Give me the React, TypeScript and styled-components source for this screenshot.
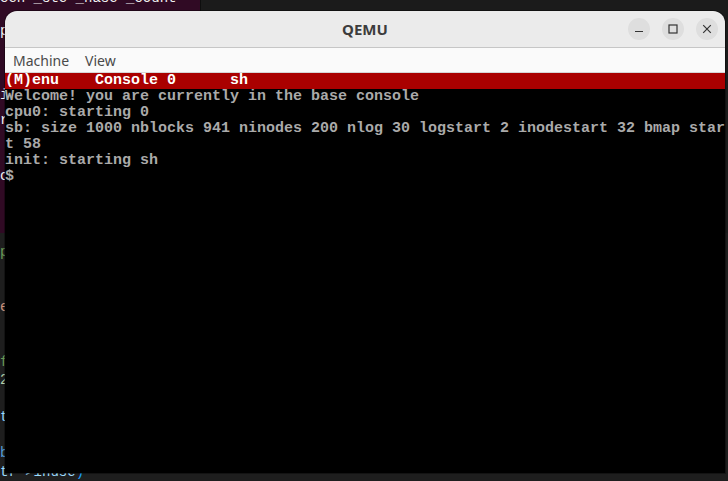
import React from "react";
import styled, { createGlobalStyle } from "styled-components";

const GlobalStyle = createGlobalStyle`
  html, body { margin: 0; padding: 0; background: #1b1b1b; }
  body { width: 728px; height: 481px; overflow: hidden; }
`;

const Desktop = styled.div`
  position: relative;
  width: 728px;
  height: 481px;
  overflow: hidden;
  background: #1b1b1b;
`;

const TermBehind = styled.div`
  position: absolute;
  left: 0;
  top: 0;
  width: 200px;
  height: 233px;
  background: #300a24;
  border-right: 1px solid #0e0e0e;
  overflow: hidden;
  display: flex;
  flex-direction: column;
  font-family: "Liberation Mono", "DejaVu Sans Mono", monospace;
  font-size: 14px;
  line-height: 18px;
  color: #f2f2f2;
`;

const EditorBehind = styled.div`
  position: absolute;
  left: 0;
  top: 233px;
  width: 728px;
  height: 248px;
  background: #1e1e1e;
  overflow: hidden;
  display: flex;
  flex-direction: column;
  padding-top: 10px;
  box-sizing: border-box;
  font-family: "Liberation Mono", "DejaVu Sans Mono", monospace;
  font-size: 14px;
  line-height: 19px;
`;

const BgLine = styled.div<{ $gap?: number; $color?: string }>`
  margin-top: ${(p) => p.$gap ?? 0}px;
  min-height: 1em;
  white-space: pre;
  color: ${(p) => p.$color ?? "inherit"};
`;

const Tok = styled.span<{ $color: string }>`
  color: ${(p) => p.$color};
`;

const Window = styled.div`
  position: absolute;
  left: 5px;
  top: 11px;
  width: 720px;
  display: flex;
  flex-direction: column;
  border-radius: 12px 12px 0 0;
  overflow: hidden;
  box-shadow: 0 0 0 1px rgba(0, 0, 0, 0.35);
`;

const TitleBar = styled.div`
  height: 36px;
  background: #ebebeb;
  border-bottom: 1px solid #c6c6c6;
  display: grid;
  grid-template-columns: 1fr auto 1fr;
  align-items: center;
`;

const Title = styled.div`
  grid-column: 2;
  font-family: "Noto Sans", "Open Sans", sans-serif;
  font-weight: 700;
  font-size: 15px;
  color: #3c3c3c;
`;

const Controls = styled.div`
  grid-column: 3;
  justify-self: end;
  display: flex;
  gap: 12px;
  padding-right: 7px;
`;

const CtrlBtn = styled.div`
  width: 22px;
  height: 22px;
  border-radius: 50%;
  background: #dedede;
  display: grid;
  place-items: center;
`;

const MenuBar = styled.div`
  height: 24px;
  background: #fafafa;
  border-bottom: 1px solid #d6d6d6;
  display: flex;
  align-items: center;
`;

const MenuItem = styled.div`
  padding: 0 8px;
  font-family: "Noto Sans", "Open Sans", sans-serif;
  font-size: 14px;
  color: #4a4a4a;
`;

const Screen = styled.div`
  height: 400px;
  background: #000;
  font-family: "Liberation Mono", "DejaVu Sans Mono", monospace;
  font-size: 15px;
  font-weight: 700;
  line-height: 16px;
  color: #aaaaaa;
  overflow: hidden;
`;

const Row = styled.div<{ $status?: boolean }>`
  height: 16px;
  white-space: pre;
  background: ${(p) => (p.$status ? "#aa0000" : "transparent")};
  color: ${(p) => (p.$status ? "#ffffff" : "#aaaaaa")};
`;

const rows = [
  "Welcome! you are currently in the base console",
  "cpu0: starting 0",
  "sb: size 1000 nblocks 941 ninodes 200 nlog 30 logstart 2 inodestart 32 bmap star",
  "t 58",
  "init: starting sh",
  "$",
];

export default function App() {
  return (
    <>
      <GlobalStyle />
      <Desktop>
        <TermBehind>
          <BgLine $gap={-11}>{"cen _ste _nase _count"}</BgLine>
          <BgLine $gap={15}>{"p"}</BgLine>
          <BgLine $gap={46}>{"i"}</BgLine>
          <BgLine $gap={7}>{"r"}</BgLine>
          <BgLine $gap={38}>{"c"}</BgLine>
        </TermBehind>
        <EditorBehind>
          <BgLine $color="#6a9955">p</BgLine>
          <BgLine> </BgLine>
          <BgLine> </BgLine>
          <BgLine $color="#ce9178">e</BgLine>
          <BgLine> </BgLine>
          <BgLine> </BgLine>
          <BgLine $color="#6a9955">f</BgLine>
          <BgLine $color="#b5cea8">2</BgLine>
          <BgLine> </BgLine>
          <BgLine $color="#9cdcfe">t</BgLine>
          <BgLine> </BgLine>
          <BgLine $color="#569cd6">b</BgLine>
          <BgLine>
            <Tok $color="#9cdcfe">tr-&gt;inuse</Tok>
            <Tok $color="#179fff">)</Tok>
          </BgLine>
        </EditorBehind>

        <Window>
          <TitleBar>
            <Title>QEMU</Title>
            <Controls>
              <CtrlBtn>
                <svg width="10" height="10" viewBox="0 0 10 10">
                  <line x1="1" y1="7.5" x2="9" y2="7.5" stroke="#333" strokeWidth="1.2" />
                </svg>
              </CtrlBtn>
              <CtrlBtn>
                <svg width="10" height="10" viewBox="0 0 10 10">
                  <rect x="1" y="1" width="8" height="8" fill="none" stroke="#333" strokeWidth="1.2" />
                </svg>
              </CtrlBtn>
              <CtrlBtn>
                <svg width="10" height="10" viewBox="0 0 10 10">
                  <path d="M1.2 1.2 L8.8 8.8 M8.8 1.2 L1.2 8.8" stroke="#333" strokeWidth="1.2" />
                </svg>
              </CtrlBtn>
            </Controls>
          </TitleBar>
          <MenuBar>
            <MenuItem>Machine</MenuItem>
            <MenuItem>View</MenuItem>
          </MenuBar>
          <Screen>
            <Row $status>{"(M)enu    Console 0      sh"}</Row>
            {rows.map((r, i) => (
              <Row key={i}>{r}</Row>
            ))}
          </Screen>
        </Window>
      </Desktop>
    </>
  );
}
